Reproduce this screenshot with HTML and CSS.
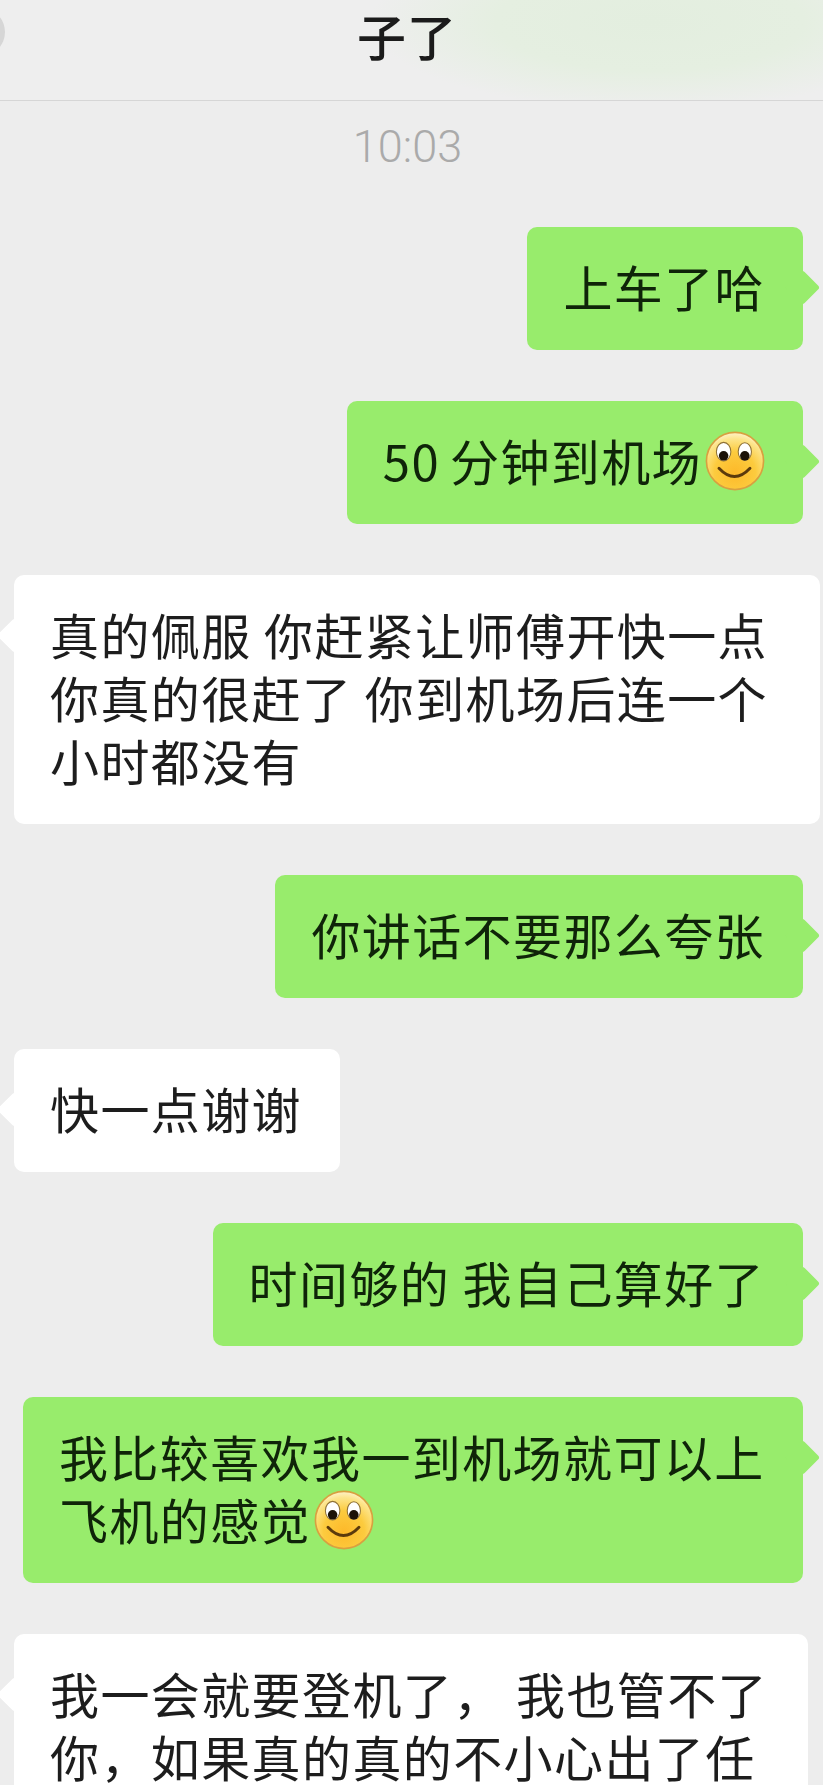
FILE: index.html
```html
<!DOCTYPE html>
<html lang="zh-CN">
<head>
<meta charset="utf-8">
<title>子了</title>
<link rel="stylesheet" href="styles.css">
</head>
<body>
<div class="screen">
  <header class="topbar">
    <span class="back-blob"></span>
    <h1 class="title">子了</h1>
  </header>
  <main class="chat">
    <div class="time">10:03</div>
    <div class="bubble me">上车了哈</div>
    <div class="bubble me"><span class="num">50</span>分钟到机场<svg class="smiley" viewBox="0 0 58 58" aria-hidden="true"><defs><radialGradient id="face" cx="50%" cy="70%" r="72%"><stop offset="0" stop-color="#fdb92a"/><stop offset="0.5" stop-color="#fccb3e"/><stop offset="0.82" stop-color="#fde58c"/><stop offset="1" stop-color="#fff4d4"/></radialGradient></defs><circle cx="29" cy="29" r="27.6" fill="url(#face)" stroke="#d8a040" stroke-width="1.6"/><ellipse cx="18" cy="20" rx="7" ry="9" fill="#fff" stroke="#8f7136" stroke-width="1"/><ellipse cx="38.5" cy="20" rx="6.4" ry="8.6" fill="#fff" stroke="#8f7136" stroke-width="1"/><circle cx="18" cy="24" r="4.6" fill="#1b1208"/><circle cx="38.5" cy="24" r="4.6" fill="#1b1208"/><path d="M13.5 36 Q28.5 52 43.5 36" fill="none" stroke="#5b3a0c" stroke-width="2.8" stroke-linecap="round"/></svg></div>
    <div class="bubble them wide-a">真的佩服 你赶紧让师傅开快一点<br>你真的很赶了 你到机场后连一个<br>小时都没有</div>
    <div class="bubble me">你讲话不要那么夸张</div>
    <div class="bubble them">快一点谢谢</div>
    <div class="bubble me">时间够的 我自己算好了</div>
    <div class="bubble me wide-b">我比较喜欢我一到机场就可以上<br>飞机的感觉<svg class="smiley" viewBox="0 0 58 58" aria-hidden="true"><defs><radialGradient id="face2" cx="50%" cy="70%" r="72%"><stop offset="0" stop-color="#fdb92a"/><stop offset="0.5" stop-color="#fccb3e"/><stop offset="0.82" stop-color="#fde58c"/><stop offset="1" stop-color="#fff4d4"/></radialGradient></defs><circle cx="29" cy="29" r="27.6" fill="url(#face2)" stroke="#d8a040" stroke-width="1.6"/><ellipse cx="18" cy="20" rx="7" ry="9" fill="#fff" stroke="#8f7136" stroke-width="1"/><ellipse cx="38.5" cy="20" rx="6.4" ry="8.6" fill="#fff" stroke="#8f7136" stroke-width="1"/><circle cx="18" cy="24" r="4.6" fill="#1b1208"/><circle cx="38.5" cy="24" r="4.6" fill="#1b1208"/><path d="M13.5 36 Q28.5 52 43.5 36" fill="none" stroke="#5b3a0c" stroke-width="2.8" stroke-linecap="round"/></svg></div>
    <div class="bubble them wide-c">我一会就要登机了， 我也管不了<br>你，如果真的真的不小心出了任</div>
  </main>
</div>
</body>
</html>
```
FILE: styles.css
```css
* { box-sizing: border-box; }
html, body { margin: 0; padding: 0; height: 1785px; overflow: hidden; background: #ededed; }
body { font-family: "Noto Sans CJK SC", "Noto Sans", sans-serif; color: #1d1d1d; }
.screen { width: 823px; height: 1785px; overflow: hidden; }

.topbar {
  position: relative;
  height: 101px;
  border-bottom: 1px solid #d6d6d6;
  padding-right: 9px;
  background:
    radial-gradient(ellipse 280px 88px at 650px 22px, #e3eedf 0%, #e5efe1 55%, rgba(238,238,238,0) 100%),
    #eeeeee;
  text-align: center;
}
.back-blob {
  position: absolute;
  left: -43px;
  top: 8px;
  width: 48px;
  height: 48px;
  border-radius: 50%;
  background: #d6d6d6;
}
.title {
  margin: 0;
  font-size: 49px;
  font-weight: 500;
  line-height: 70px;
  letter-spacing: 1px;
  color: #1b1b1b;
}

.chat {
  display: flex;
  flex-direction: column;
  align-items: flex-start;
  gap: 51px;
  padding-top: 17px;
}
.time {
  align-self: center;
  margin-right: 8px;
  height: 58px;
  font-family: Roboto, sans-serif;
  font-weight: 300;
  font-size: 45px;
  line-height: 57px;
  color: #aaaaaa;
}
.bubble {
  position: relative;
  padding: 27px 38px 33px 36px;
  font-size: 49px;
  line-height: 63px;
  letter-spacing: 1.4px;
  white-space: nowrap;
  border-radius: 10px;
}
.bubble::after {
  content: "";
  position: absolute;
  top: 48px;
  width: 25px;
  height: 25px;
  border-radius: 3px;
  transform: rotate(45deg);
  background: inherit;
}
.me {
  align-self: flex-end;
  margin-right: 20px;
  background: #98ec6c;
  color: #0f2409;
}
.me::after { right: -12px; }
.them {
  margin-left: 14px;
  background: #ffffff;
}
.them::after { left: -12px; }

.wide-a { width: 806px; }
.wide-b { width: 780px; }
.wide-c { width: 794px; }

.num { margin-right: 10px; }
.smiley {
  width: 60px;
  height: 60px;
  margin-left: 3px;
  vertical-align: -10px;
}
```
